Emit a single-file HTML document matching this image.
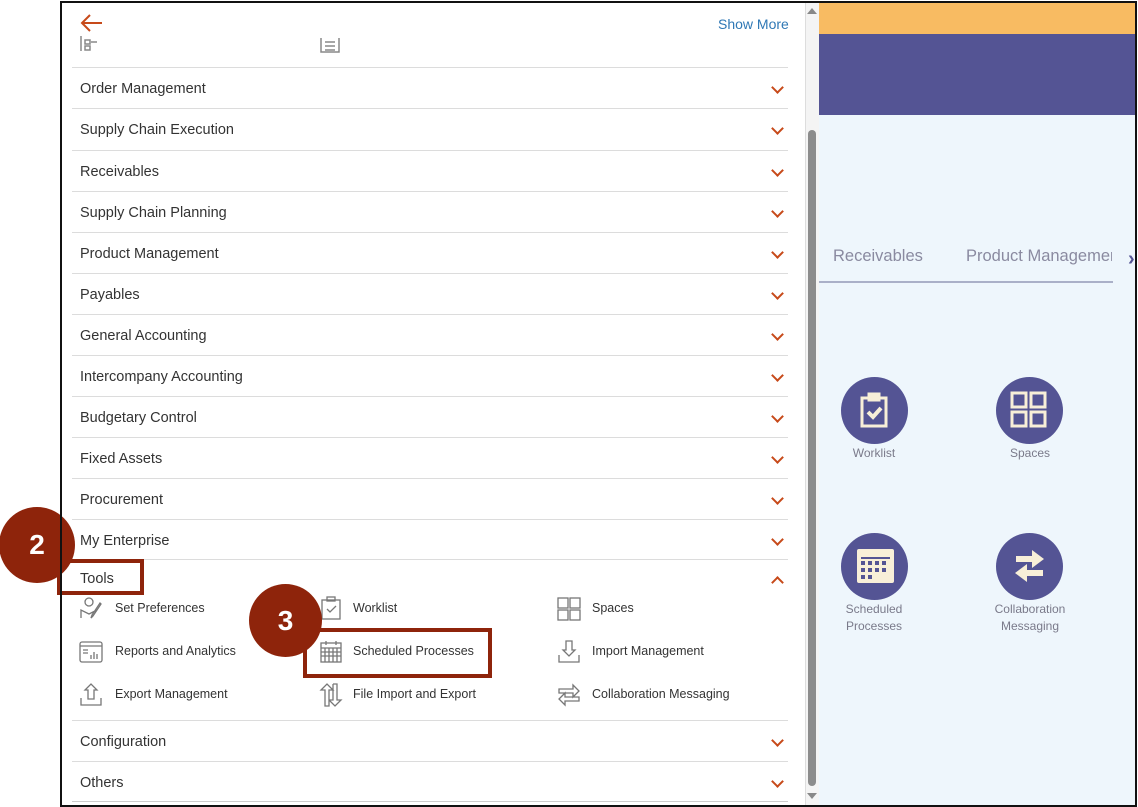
<!DOCTYPE html>
<html><head><style>
*{margin:0;padding:0;box-sizing:border-box}
body{width:1138px;height:807px;background:#fff;position:relative;overflow:hidden;font-family:"Liberation Sans",sans-serif}
.abs{position:absolute}
.frame{left:60px;top:1px;width:1077px;height:806px;border:2px solid #111;}
.row{position:absolute;left:72px;width:716px;height:41px;border-top:1px solid #dcdcdc;font-size:14.5px;color:#333;padding-left:8px;line-height:42px}
.chev{position:absolute;right:6px;top:15px;width:9px;height:9px;border-right:2px solid #c74a1a;border-bottom:2px solid #c74a1a;transform:rotate(45deg)}
.item{position:absolute;font-size:12.5px;color:#333}
.ic{position:absolute;width:24px;height:24px}
.circ{position:absolute;width:67px;height:67px;border-radius:50%;background:#545494}
.lab{position:absolute;font-size:12px;color:#7a7a8a;text-align:center;width:120px;line-height:17px}
.badge{position:absolute;border-radius:50%;background:#8e240b;color:#fff;font-weight:bold;font-size:28px;text-align:center}
.box{position:absolute;border:4px solid #8e240b}
</style></head><body>
<div class="abs" style="left:819px;top:2px;width:318px;height:32px;background:#f8bb62"></div>
<div class="abs" style="left:819px;top:34px;width:318px;height:81px;background:#545494"></div>
<div class="abs" style="left:819px;top:115px;width:318px;height:692px;background:#eef6fc"></div>
<div class="abs" style="left:833px;top:247px;font-size:16.5px;color:#8a8aa0;white-space:nowrap">Receivables</div>
<div class="abs" style="left:966px;top:247px;width:146px;overflow:hidden;font-size:16.5px;color:#8a8aa0;white-space:nowrap">Product Management</div>
<div class="abs" style="left:1128px;top:248px;font-size:20px;color:#545494;font-weight:bold">›</div>
<div class="abs" style="left:819px;top:281px;width:294px;height:2px;background:#aab0c8"></div>

<div class="circ" style="left:841px;top:377px"><svg width="67" height="67" viewBox="0 0 67 67" fill="none" stroke="#f8efd8" stroke-width="3"><rect x="21" y="21" width="24" height="28"/><rect x="28" y="17" width="10" height="6" fill="#f8efd8"/><path d="M27 35l5 5 8-9" stroke-width="4"/></svg></div>
<div class="lab" style="left:814px;top:445px">Worklist</div>
<div class="circ" style="left:996px;top:377px"><svg width="67" height="67" viewBox="0 0 67 67" fill="none" stroke="#f8efd8" stroke-width="3"><rect x="16" y="16" width="14" height="14"/><rect x="35" y="16" width="14" height="14"/><rect x="16" y="35" width="14" height="14"/><rect x="35" y="35" width="14" height="14"/></svg></div>
<div class="lab" style="left:970px;top:445px">Spaces</div>
<div class="circ" style="left:841px;top:533px"><svg width="67" height="67" viewBox="0 0 67 67"><rect x="16" y="16" width="37" height="34" rx="2" fill="#f8efd8"/><g fill="#545494"><rect x="20" y="24" width="29" height="2"/></g><g fill="#545494"><rect x="20" y="28" width="4" height="4"/><rect x="27" y="28" width="4" height="4"/><rect x="34" y="28" width="4" height="4"/><rect x="41" y="28" width="4" height="4"/><rect x="20" y="35" width="4" height="4"/><rect x="27" y="35" width="4" height="4"/><rect x="34" y="35" width="4" height="4"/><rect x="41" y="35" width="4" height="4"/><rect x="20" y="42" width="4" height="4"/><rect x="27" y="42" width="4" height="4"/></g></svg></div>
<div class="lab" style="left:814px;top:601px">Scheduled<br>Processes</div>
<div class="circ" style="left:996px;top:533px"><svg width="67" height="67" viewBox="0 0 67 67" fill="#f8efd8"><path d="M20 23h16v-6l12 9-12 9v-6H20z"/><path d="M47 37H31v-6l-12 9 12 9v-6h16z"/></svg></div>
<div class="lab" style="left:970px;top:601px">Collaboration<br>Messaging</div>

<div class="abs" style="left:805px;top:2px;width:14px;height:804px;background:#f4f4f4;border-left:1px solid #ddd"></div>
<div class="abs" style="left:808px;top:130px;width:8px;height:656px;background:#8c8c8c;border-radius:4px"></div>
<div class="abs" style="left:807px;top:8px;border:5px solid transparent;border-bottom:6px solid #888;border-top:0"></div>
<div class="abs" style="left:807px;top:793px;border:5px solid transparent;border-top:6px solid #888;border-bottom:0"></div>

<svg class="abs" style="left:80px;top:13px" width="24" height="20" viewBox="0 0 24 20" fill="none" stroke="#c74a1a" stroke-width="2"><path d="M22 10H3M10 2L2 10l8 8"/></svg>
<div class="abs" style="left:718px;top:16px;font-size:14px;color:#2f78b5">Show More</div>
<svg class="abs" style="left:80px;top:36px" width="20" height="16" fill="none" stroke="#888" stroke-width="1.5"><path d="M1 0v15M5 4h5v4H5zM5 10h5v4H5zM11 6h6"/></svg>
<svg class="abs" style="left:320px;top:36px" width="20" height="18" fill="none" stroke="#888" stroke-width="1.5"><path d="M1 2v14h18V2M5 6h10M5 10h10M5 14h10"/></svg>

<div class="row" style="top:67px">Order Management<i class="chev"></i></div>
<div class="row" style="top:108px">Supply Chain Execution<i class="chev"></i></div>
<div class="row" style="top:150px">Receivables<i class="chev"></i></div>
<div class="row" style="top:191px">Supply Chain Planning<i class="chev"></i></div>
<div class="row" style="top:232px">Product Management<i class="chev"></i></div>
<div class="row" style="top:273px">Payables<i class="chev"></i></div>
<div class="row" style="top:314px">General Accounting<i class="chev"></i></div>
<div class="row" style="top:355px">Intercompany Accounting<i class="chev"></i></div>
<div class="row" style="top:396px">Budgetary Control<i class="chev"></i></div>
<div class="row" style="top:437px">Fixed Assets<i class="chev"></i></div>
<div class="row" style="top:478px">Procurement<i class="chev"></i></div>
<div class="row" style="top:519px">My Enterprise<i class="chev"></i></div>
<div class="row" style="top:559px;height:40px;line-height:38px">Tools<i class="chev" style="transform:rotate(-135deg);top:18px"></i></div>

<svg class="ic" style="left:79px;top:596px" viewBox="0 0 24 24" fill="none" stroke="#777" stroke-width="1.3"><circle cx="10" cy="6" r="4"/><path d="M2 22v-8l8 4 8-4M22 8l-8 12-2 2 1-3 8-12z"/></svg><div class="item" style="left:115px;top:601px">Set Preferences</div>
<svg class="ic" style="left:319px;top:596px" viewBox="0 0 24 24" fill="none" stroke="#777" stroke-width="1.3"><rect x="3" y="4" width="18" height="19"/><rect x="8" y="1" width="8" height="4"/><path d="M8 13l3 3 6-6"/></svg><div class="item" style="left:353px;top:601px">Worklist</div>
<svg class="ic" style="left:557px;top:597px" viewBox="0 0 24 24" fill="none" stroke="#777" stroke-width="1.3"><rect x="1" y="1" width="10" height="10"/><rect x="13" y="1" width="10" height="10"/><rect x="1" y="13" width="10" height="10"/><rect x="13" y="13" width="10" height="10"/></svg><div class="item" style="left:592px;top:601px">Spaces</div>
<svg class="ic" style="left:79px;top:640px" viewBox="0 0 24 24" fill="none" stroke="#777" stroke-width="1.3"><rect x="1" y="2" width="22" height="20" rx="2"/><path d="M1 6h22M4 10h5M4 13h5M12 19v-4M15 19v-7M18 19v-5"/></svg><div class="item" style="left:115px;top:644px">Reports and Analytics</div>
<svg class="ic" style="left:319px;top:640px" viewBox="0 0 24 24" fill="none" stroke="#777" stroke-width="1.3"><rect x="2" y="3" width="20" height="19"/><path d="M2 8h20M2 12h20M2 16h20M6 8v14M10 8v14M14 8v14M18 8v14M7 1v4M17 1v4"/></svg><div class="item" style="left:353px;top:644px">Scheduled Processes</div>
<svg class="ic" style="left:557px;top:640px" viewBox="0 0 24 24" fill="none" stroke="#777" stroke-width="1.3"><path d="M9 1v9H6l6 6 6-6h-3V1zM2 15v7h20v-7"/></svg><div class="item" style="left:592px;top:644px">Import Management</div>
<svg class="ic" style="left:79px;top:683px" viewBox="0 0 24 24" fill="none" stroke="#777" stroke-width="1.3"><path d="M9 16V7H6l6-6 6 6h-3v9zM2 15v7h20v-7"/></svg><div class="item" style="left:115px;top:687px">Export Management</div>
<svg class="ic" style="left:319px;top:683px" viewBox="0 0 24 24" fill="none" stroke="#777" stroke-width="1.3"><path d="M6 23V7H2l6-6 6 6h-4v16zM14 1v16h-4M14 17"/><path d="M14 1h4v16h4l-6 6-6-6"/></svg><div class="item" style="left:353px;top:687px">File Import and Export</div>
<svg class="ic" style="left:557px;top:683px" viewBox="0 0 24 24" fill="none" stroke="#777" stroke-width="1.3"><path d="M2 6h14V2l6 6-6 6v-4H2zM22 14H8v-4l-6 6 6 6v-4h14z"/></svg><div class="item" style="left:592px;top:687px">Collaboration Messaging</div>

<div class="row" style="top:720px">Configuration<i class="chev"></i></div>
<div class="row" style="top:761px;border-bottom:1px solid #ccc">Others<i class="chev"></i></div>

<div class="box" style="left:57px;top:559px;width:87px;height:36px"></div>
<div class="box" style="left:303px;top:628px;width:189px;height:50px"></div>
<div class="badge" style="left:-1px;top:507px;width:76px;height:76px;line-height:76px">2</div>
<div class="badge" style="left:249px;top:584px;width:73px;height:73px;line-height:73px">3</div>
<div class="frame abs"></div>
</body></html>
